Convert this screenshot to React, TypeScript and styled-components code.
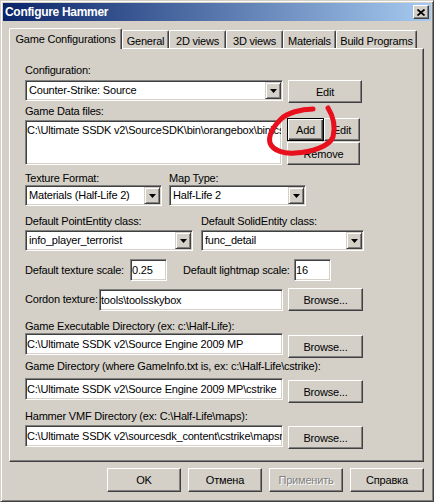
import React from 'react';
import styled, { createGlobalStyle } from 'styled-components';

const GlobalStyle = createGlobalStyle`
  html, body {
    margin: 0;
    padding: 0;
    background: #d4d0c8;
  }
  body {
    font-family: 'Liberation Sans', Arial, sans-serif;
    font-size: 11px;
    letter-spacing: -0.2px;
    color: #000;
  }
`;

// win2k bevels
const raised = `
  border: 1px solid;
  border-color: #fff #404040 #404040 #fff;
  box-shadow: inset -1px -1px #808080;
`;

const sunken = `
  border: 1px solid;
  border-color: #808080 #fff #fff #808080;
  box-shadow: inset 1px 1px #404040, inset -1px -1px #d4d0c8;
`;

const Window = styled.div`
  position: relative;
  box-sizing: border-box;
  width: 434px;
  height: 502px;
  padding: 2px;
  display: flex;
  flex-direction: column;
  background: #d4d0c8;
  border: 1px solid;
  border-color: #d4d0c8 #404040 #404040 #d4d0c8;
  box-shadow: inset 1px 1px #fff, inset -1px -1px #808080;
`;

const TitleBar = styled.div`
  height: 18px;
  flex: 0 0 18px;
  display: flex;
  align-items: center;
  justify-content: space-between;
  padding: 0 2px 0 2px;
  background: linear-gradient(to right, #0a246a, #a6caf0);
  color: #fff;
  font-weight: bold;
  font-size: 12px;
  letter-spacing: -0.3px;
`;

const CloseButton = styled.div`
  box-sizing: border-box;
  width: 16px;
  height: 14px;
  display: flex;
  align-items: center;
  justify-content: center;
  background: #d4d0c8;
  ${raised}
`;

const Body = styled.div`
  flex: 1;
  display: flex;
  flex-direction: column;
  padding: 7px 7px 0 6px;
`;

const TabStrip = styled.div`
  position: relative;
  z-index: 1;
  display: flex;
  align-items: flex-end;
  height: 21px;
  margin-bottom: -1px;
`;

const Tab = styled.div<{ $w: number; $active?: boolean }>`
  box-sizing: border-box;
  width: ${(p) => p.$w}px;
  height: ${(p) => (p.$active ? 21 : 18)}px;
  margin-bottom: ${(p) => (p.$active ? 0 : 1)}px;
  padding-top: ${(p) => (p.$active ? 0 : 2)}px;
  display: flex;
  align-items: center;
  justify-content: center;
  white-space: nowrap;
  background: #d4d0c8;
  border: 1px solid;
  border-bottom: none;
  border-color: #fff #404040 #404040 #fff;
  border-radius: 2px 2px 0 0;
  box-shadow: inset -1px 0 #808080;
`;

const Panel = styled.div`
  box-sizing: border-box;
  width: 415px;
  height: 414px;
  padding: 15px 0 0 15px;
  display: flex;
  flex-direction: column;
  ${raised}
`;

const Label = styled.div<{ $mt?: number; $w?: number; $pl?: number }>`
  box-sizing: border-box;
  margin-top: ${(p) => p.$mt ?? 0}px;
  padding-left: ${(p) => p.$pl ?? 0}px;
  ${(p) => (p.$w ? `width: ${p.$w}px; flex: 0 0 ${p.$w}px;` : '')}
  height: 13px;
  line-height: 13px;
  white-space: nowrap;
`;

const Row = styled.div<{ $mt?: number; $gap?: number; $center?: boolean }>`
  display: flex;
  align-items: ${(p) => (p.$center ? 'center' : 'flex-start')};
  margin-top: ${(p) => p.$mt ?? 0}px;
  gap: ${(p) => p.$gap ?? 0}px;
`;

const Column = styled.div<{ $w: number }>`
  width: ${(p) => p.$w}px;
  display: flex;
  flex-direction: column;
`;

const ComboBox = styled.div<{ $w: number; $mt?: number }>`
  box-sizing: border-box;
  width: ${(p) => p.$w}px;
  height: 21px;
  margin-top: ${(p) => p.$mt ?? 0}px;
  padding: 1px;
  display: flex;
  background: #fff;
  ${sunken}
`;

const ComboText = styled.div`
  flex: 1;
  padding-left: 2px;
  line-height: 17px;
  white-space: nowrap;
  overflow: hidden;
`;

const ArrowButton = styled.div`
  box-sizing: border-box;
  width: 16px;
  height: 17px;
  display: flex;
  align-items: center;
  justify-content: center;
  background: #d4d0c8;
  border: 1px solid;
  border-color: #d4d0c8 #404040 #404040 #d4d0c8;
  box-shadow: inset 1px 1px #fff, inset -1px -1px #808080;
`;

const TextBox = styled.div<{ $w: number; $h?: number; $mt?: number }>`
  box-sizing: border-box;
  width: ${(p) => p.$w}px;
  height: ${(p) => p.$h ?? 22}px;
  margin-top: ${(p) => p.$mt ?? 0}px;
  padding: 1px 1px 0 1px;
  line-height: 18px;
  white-space: nowrap;
  overflow: hidden;
  background: #fff;
  ${sunken}
`;

const ListText = styled.div`
  line-height: 14px;
  padding-top: 1px;
`;

const Button = styled.div<{ $w: number; $h?: number; $mt?: number; $ml?: number; $disabled?: boolean }>`
  box-sizing: border-box;
  width: ${(p) => p.$w}px;
  height: ${(p) => p.$h ?? 23}px;
  margin-top: ${(p) => p.$mt ?? 0}px;
  margin-left: ${(p) => p.$ml ?? 0}px;
  flex: 0 0 auto;
  display: flex;
  align-items: center;
  justify-content: center;
  white-space: nowrap;
  overflow: hidden;
  background: #d4d0c8;
  color: ${(p) => (p.$disabled ? '#808080' : '#000')};
  text-shadow: ${(p) => (p.$disabled ? '1px 1px #fff' : 'none')};
  ${raised}
`;

const DefaultButton = styled(Button)`
  border-color: #000;
  box-shadow: inset 1px 1px #fff, inset -1px -1px #404040, inset -2px -2px #808080;
`;

const SideButtons = styled.div`
  display: flex;
  flex-direction: column;
  margin-left: 5px;
  margin-top: -2px;
`;

const Footer = styled.div`
  display: flex;
  justify-content: flex-end;
  gap: 7px;
  margin-top: 6px;
`;

const Scribble = styled.svg`
  position: absolute;
  left: 262px;
  top: 100px;
  pointer-events: none;
`;

const DropArrow = () => (
  <svg width="7" height="4" viewBox="0 0 7 4">
    <polygon points="0,0 7,0 3.5,4" fill="#000" />
  </svg>
);

const Combo: React.FC<{ w: number; value: string; mt?: number }> = ({ w, value, mt }) => (
  <ComboBox $w={w} $mt={mt}>
    <ComboText>{value}</ComboText>
    <ArrowButton>
      <DropArrow />
    </ArrowButton>
  </ComboBox>
);

const tabs = [
  { name: 'Game Configurations', w: 113 },
  { name: 'General', w: 47 },
  { name: '2D views', w: 57 },
  { name: '3D views', w: 57 },
  { name: 'Materials', w: 53 },
  { name: 'Build Programs', w: 81 },
];

export default function App() {
  return (
    <>
      <GlobalStyle />
      <Window>
        <TitleBar>
          <span>Configure Hammer</span>
          <CloseButton>
            <svg width="8" height="7" viewBox="0 0 8 7">
              <path d="M0.5 0.5 L7.5 6.5 M7.5 0.5 L0.5 6.5" stroke="#000" strokeWidth="1.7" />
            </svg>
          </CloseButton>
        </TitleBar>

        <Body>
          <TabStrip>
            {tabs.map((t, i) => (
              <Tab key={t.name} $w={t.w} $active={i === 0}>
                {t.name}
              </Tab>
            ))}
          </TabStrip>

          <Panel>
            <Label>Configuration:</Label>
            <Row $mt={3}>
              <Combo w={258} value="Counter-Strike: Source" />
              <Button $w={74} $ml={5}>Edit</Button>
            </Row>

            <Label $mt={2}>Game Data files:</Label>
            <Row $mt={2}>
              <TextBox $w={257} $h={45}>
                <ListText>C:\Ultimate SSDK v2\SourceSDK\bin\orangebox\bin\cstrike.fgd</ListText>
              </TextBox>
              <SideButtons>
                <Row>
                  <DefaultButton $w={37}>Add</DefaultButton>
                  <Button $w={36}>Edit</Button>
                </Row>
                <Button $w={73} $mt={1}>Remove</Button>
              </SideButtons>
            </Row>

            <Row $mt={7} $gap={7}>
              <Column $w={137}>
                <Label>Texture Format:</Label>
                <Combo w={137} value="Materials (Half-Life 2)" />
              </Column>
              <Column $w={137}>
                <Label>Map Type:</Label>
                <Combo w={137} value="Half-Life 2" />
              </Column>
            </Row>

            <Row $mt={9} $gap={8}>
              <Column $w={168}>
                <Label>Default PointEntity class:</Label>
                <Combo w={168} value="info_player_terrorist" mt={2} />
              </Column>
              <Column $w={163}>
                <Label>Default SolidEntity class:</Label>
                <Combo w={163} value="func_detail" mt={2} />
              </Column>
            </Row>

            <Row $mt={8} $center>
              <Label $w={105}>Default texture scale:</Label>
              <TextBox $w={37}>0.25</TextBox>
              <Label $w={127} $pl={16}>Default lightmap scale:</Label>
              <TextBox $w={37}>16</TextBox>
            </Row>

            <Row $mt={7} $center>
              <Label $w={74}>Cordon texture:</Label>
              <TextBox $w={184}>tools\toolsskybox</TextBox>
              <Button $w={75} $ml={5}>Browse...</Button>
            </Row>

            <Label $mt={9}>Game Executable Directory (ex: c:\Half-Life):</Label>
            <Row>
              <TextBox $w={258}>C:\Ultimate SSDK v2\Source Engine 2009 MP</TextBox>
              <Button $w={75} $ml={5} $mt={2}>Browse...</Button>
            </Row>

            <Label $mt={2}>Game Directory (where GameInfo.txt is, ex: c:\Half-Life\cstrike):</Label>
            <Row $mt={5}>
              <TextBox $w={258}>C:\Ultimate SSDK v2\Source Engine 2009 MP\cstrike</TextBox>
              <Button $w={75} $ml={5} $mt={2}>Browse...</Button>
            </Row>

            <Label $mt={7}>Hammer VMF Directory (ex: C:\Half-Life\maps):</Label>
            <Row $mt={2}>
              <TextBox $w={258}>C:\Ultimate SSDK v2\sourcesdk_content\cstrike\mapsrc</TextBox>
              <Button $w={75} $ml={5} $mt={1}>Browse...</Button>
            </Row>
          </Panel>

          <Footer>
            <Button $w={74} $h={24}>OK</Button>
            <Button $w={74} $h={24}>Отмена</Button>
            <Button $w={74} $h={24} $disabled>Применить</Button>
            <Button $w={74} $h={24}>Справка</Button>
          </Footer>
        </Body>

        <Scribble width="80" height="60" viewBox="0 0 80 60">
          <path
            d="M50 8 C38 8 24 12 18 18 C10 26 5 34 7 42 C10 50 22 53 32 52 C48 51 66 46 70 36 C72 28 72 18 65 7"
            fill="none"
            stroke="#e8101c"
            strokeWidth="5"
            strokeLinecap="round"
          />
        </Scribble>
      </Window>
    </>
  );
}
